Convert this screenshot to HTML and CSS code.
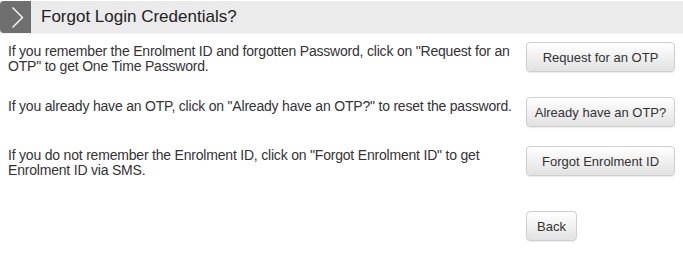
FILE: index.html
```html
<!DOCTYPE html>
<html>
<head>
<meta charset="utf-8">
<link rel="stylesheet" href="styles.css">
</head>
<body>
<div class="header">
  <div class="header-icon">
    <svg width="31" height="32" viewBox="0 0 31 32"><polyline points="12.5,6.5 22.5,16.5 12.5,26.5" fill="none" stroke="#fff" stroke-width="1.4"/></svg>
  </div>
  <h1 class="title">Forgot Login Credentials?</h1>
</div>
<div class="content">
  <div class="row">
    <p class="text">If you remember the Enrolment ID and forgotten Password, click on "Request for an OTP" to get One Time Password.</p>
    <div class="action"><button class="btn btn-wide">Request for an OTP</button></div>
  </div>
  <div class="row">
    <p class="text">If you already have an OTP, click on "Already have an OTP?" to reset the password.</p>
    <div class="action"><button class="btn btn-wide">Already have an OTP?</button></div>
  </div>
  <div class="row">
    <p class="text">If you do not remember the Enrolment ID, click on "Forgot Enrolment ID" to get Enrolment ID via SMS.</p>
    <div class="action"><button class="btn btn-wide">Forgot Enrolment ID</button></div>
  </div>
  <div class="row row-back">
    <div class="text"></div>
    <div class="action"><button class="btn">Back</button></div>
  </div>
</div>
</body>
</html>
```
FILE: styles.css
```css
html, body {
  margin: 0;
  padding: 0;
  background: #fff;
  font-family: "Liberation Sans", Arial, sans-serif;
  color: #333;
}
.header {
  display: flex;
  align-items: center;
  height: 32px;
  margin-top: 1px;
  background: #ebebeb;
  border-bottom: 1px solid #f4f4f4;
}
.header-icon {
  width: 31px;
  height: 32px;
  background: #6f6f6f;
  border-radius: 4px 0 0 4px;
  flex: none;
}
.header-icon svg { display: block; }
.title {
  margin: 0 0 0 10px;
  font-size: 17px;
  font-weight: normal;
  color: #222;
  line-height: 32px;
}
.content {
  padding: 8px 8px 0 8px;
}
.row {
  display: flex;
  align-items: flex-start;
  margin-bottom: 19px;
}
.row-back { margin-top: 29px; }
.text {
  width: 510px;
  margin: 0;
  font-size: 14px;
  letter-spacing: -0.2px;
  line-height: 15px;
  padding: 2px 0 4px 0;
}
.action {
  margin-left: 8px;
  flex: none;
}
.btn {
  font-family: "Liberation Sans", Arial, sans-serif;
  font-size: 13px;
  color: #333;
  height: 30px;
  padding: 0 10px;
  white-space: nowrap;
  border: 1px solid #cfcfcf;
  border-radius: 4px;
  background: linear-gradient(#ffffff, #e2e2e2);
  box-shadow: 0 1px 1px rgba(0,0,0,0.08);
  cursor: pointer;
}
.btn-wide { width: 149px; padding: 0 4px; }
```
